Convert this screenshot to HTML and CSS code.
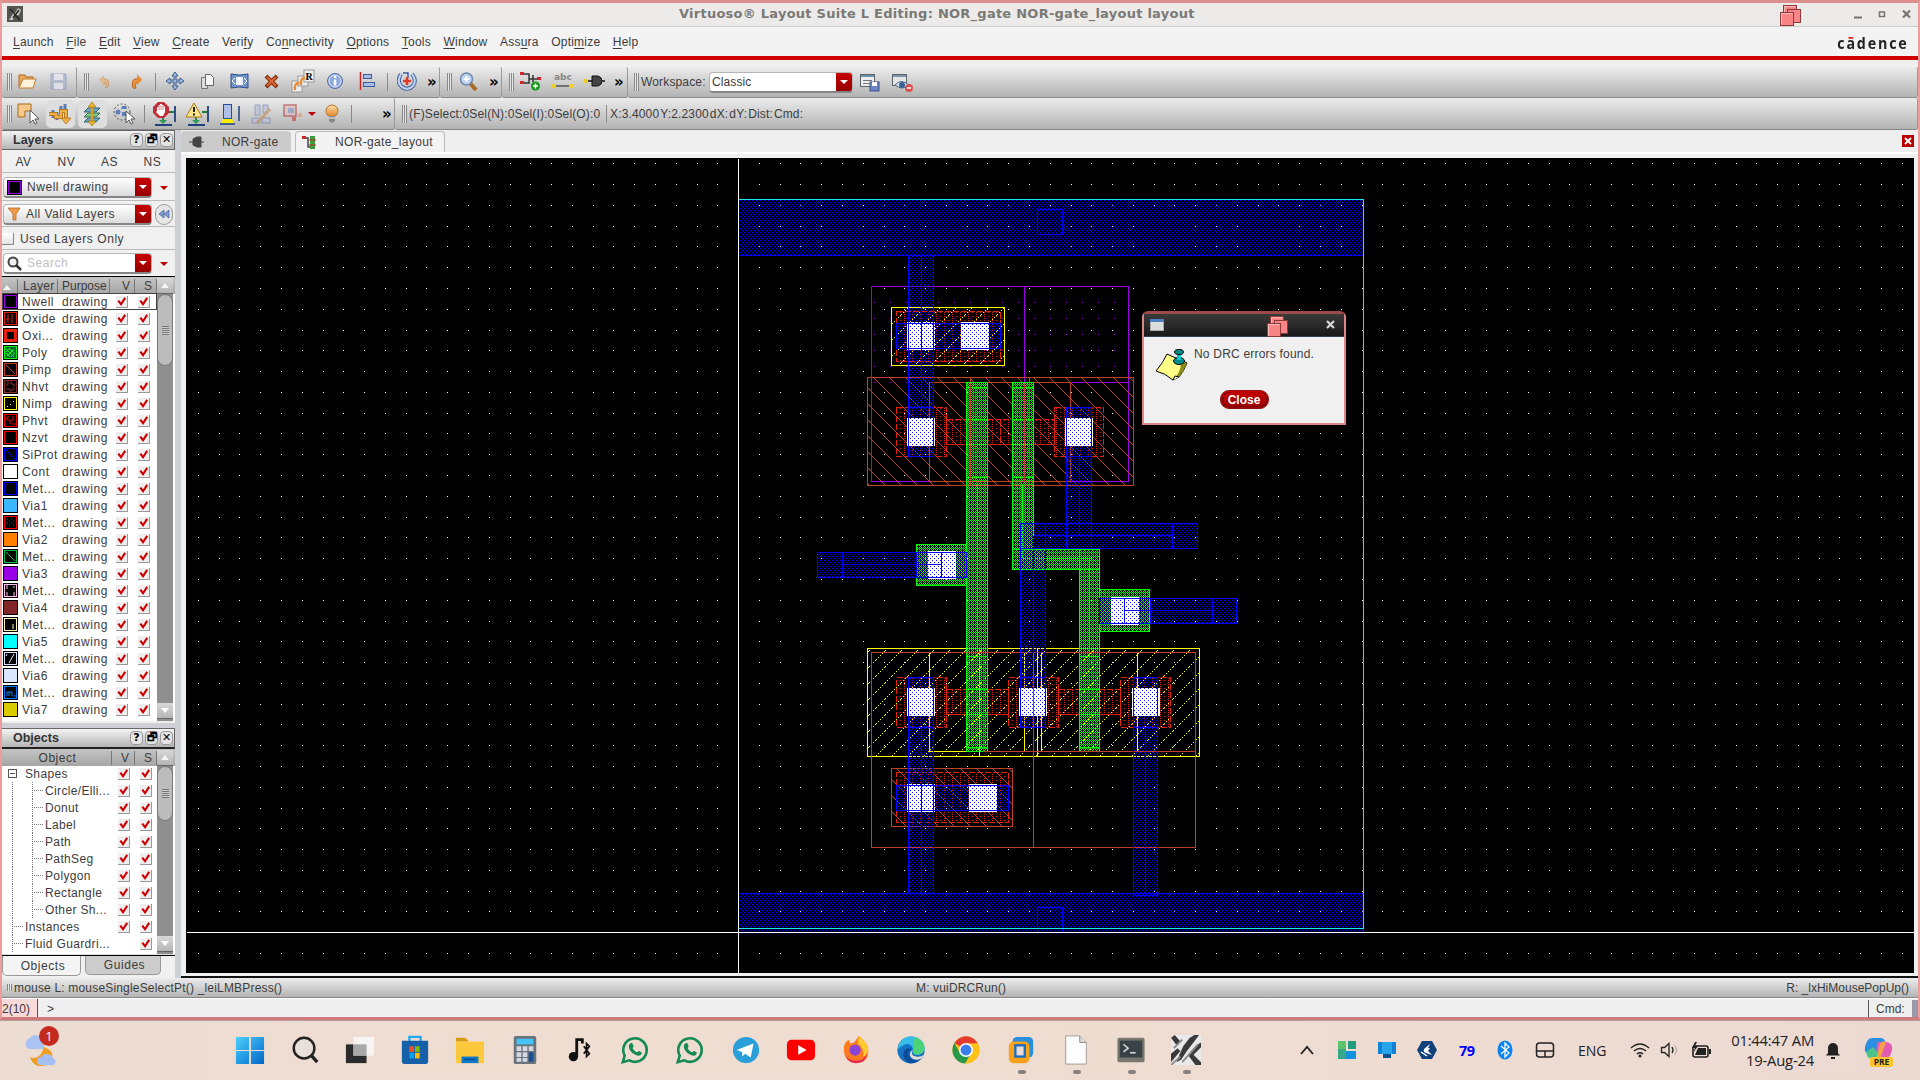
FILE: index.html
```html
<!DOCTYPE html>
<html lang="en">
<head>
<meta charset="utf-8">
<title>Virtuoso Layout Suite L Editing</title>
<link rel="stylesheet" href="styles.css">
</head>
<body>
<svg class="defs" width="0" height="0">
  <defs>
    <linearGradient id="gOrange" x1="0" y1="0" x2="0" y2="1"><stop offset="0" stop-color="#ffe0a8"/><stop offset="1" stop-color="#d98025"/></linearGradient>
    <linearGradient id="gBlue" x1="0" y1="0" x2="1" y2="1"><stop offset="0" stop-color="#4fd0ff"/><stop offset="1" stop-color="#0067c8"/></linearGradient>
    <symbol id="cascade" viewBox="0 0 21 21"><g fill="#f88686" stroke="#8d3a3a"><rect x="3.5" y=".5" width="13" height="14"/><rect x="7.500" y="4.500" width="13" height="13"/><rect x=".5" y="7.500" width="13" height="13"/></g><path d="M1.500 19.500v-11h11M4.500 7v-5.500h11" fill="none" stroke="#fcb9b9"/></symbol>
    <symbol id="whatsapp" viewBox="0 0 32 32"><path d="M3 29l2-7A12.500 12.500 0 1 1 10 27z" fill="none" stroke="#148a54" stroke-width="2.800"/><path d="M11 9c1-1 2-1 2.500.5l1 2.500c0 1-1.300 1.500-1 2.200 1 2 2.300 3.200 4.500 4.200 1 .2 1.400-1.600 2.400-1.300l2.500 1.200c1 1-.5 3.700-2.500 3.700-5 .2-11-5-11-10 0-1 .8-2.300 1.600-3z" fill="#148a54"/></symbol>
  </defs>
</svg>

<div class="win">
  <header class="titlebar">
    <svg class="app-icon" width="16" height="16"><rect width="16" height="16" fill="#55554f"/><path d="M2 14L6 8 4 5l4 2 3-5 3 2-2 5-4 1-2 4z" fill="#c8c8c4"/><path d="M3 3l10 11M6 12l6-8" stroke="#222" stroke-width="1.500"/></svg>
    <h1>Virtuoso® Layout Suite L Editing: NOR_gate NOR-gate_layout layout</h1>
    <div class="win-buttons">
      <svg class="casc" width="21" height="21"><use href="#cascade"/></svg>
      <svg width="60" height="14"><path d="M1 9.500h8" stroke="#747471" stroke-width="2"/><rect x="26.500" y="4" width="5" height="4.500" fill="none" stroke="#747471" stroke-width="1.500"/><path d="M50 2.500l7 7m0-7l-7 7" stroke="#747471" stroke-width="2.200"/></svg>
    </div>
  </header>
  <nav class="menubar">
    <span><u>L</u>aunch</span><span><u>F</u>ile</span><span><u>E</u>dit</span><span><u>V</u>iew</span><span><u>C</u>reate</span><span>Veri<u>f</u>y</span><span>Co<u>n</u>nectivity</span><span><u>O</u>ptions</span><span><u>T</u>ools</span><span><u>W</u>indow</span><span>Ass<u>u</u>ra</span><span>Opti<u>m</u>ize</span><span><u>H</u>elp</span>
    <b class="logo">c<i>ā</i>dence</b>
  </nav>

  <div class="toolrow one">
    <div class="group g1"><em class="grip"></em>
      <div class="cell w30"><svg width="20" height="18"><path d="M2 15V3h6l1 2h7v3" fill="#e9a75a" stroke="#b06a20"/><path d="M2 16L6 7h13l-3 9z" fill="#fff2dc" stroke="#c27a2c"/></svg></div>
      <div class="cell w32"><svg width="17" height="17" opacity=".75"><path d="M1 1h15v15H1z" fill="#a9b4cf" stroke="#8b98b8"/><path d="M4 1h9v6H4zM4 10h9v6H4z" fill="#e4e7ef"/></svg></div></div>
    <div class="group g2"><em class="grip"></em>
      <div class="cell w31"><svg width="14" height="18" opacity=".8"><path d="M2 7h6q4 1 2 8-1 1-3 1 3-5-1-5v2z" fill="#e5b27e" stroke="#c9915a"/><path d="M6 3L1 8l5 5z" fill="#e5b27e"/></svg></div>
      <div class="cell w31"><svg width="14" height="18"><path d="M12 7H6q-4 1-2 9 1 1 3 0-2-5 1-5z" fill="#f0923a" stroke="#bb6820"/><path d="M8 2l5 6-5 5z" fill="#e98a30"/></svg></div>
      <em class="sep"></em>
      <div class="cell w32"><svg width="20" height="20"><path d="M10 1l3 4h-2v4h4V7l4 3-4 3v-2h-4v4h2l-3 4-3-4h2v-4H5v2l-4-3 4-3v2h4V5H7z" fill="#9db6d6" stroke="#3c5f8f"/></svg></div>
      <div class="cell w32"><svg width="15" height="17"><path d="M1.500 4.500h6v11h-6z" fill="#ddd" stroke="#777"/><path d="M5.500 1.500h5l3 3v8h-8z" fill="#f4f4f4" stroke="#666"/></svg></div>
      <div class="cell w32"><svg width="19" height="16"><path d="M1 1q9 2 17 0v14q-9-2-17 0z" fill="#6f93c8" stroke="#2d4e84"/><rect x="6" y="4" width="7" height="8" fill="#eef3fb"/><path d="M9.500 4v8M5 5L2 8l3 3M14 5l3 3-3 3" stroke="#fff" fill="none"/></svg></div>
      <div class="cell w32"><svg width="15" height="15"><path d="M2 2l11 11M13 2L2 13" stroke="#7e2d10" stroke-width="4"/><path d="M3 3l9 9M12 3l-9 9" stroke="#e0672b" stroke-width="2"/></svg></div>
      <div class="cell w32"><svg width="24" height="24"><g fill="#eee" stroke="#999"><rect x="1" y="12" width="10" height="11"/><rect x="7" y="7" width="10" height="10"/><rect x="13" y="1" width="10" height="12"/></g><text x="14.500" y="11" class="rfont">R</text><path d="M4 21q-1-7 4-7M10 16q-1-7 4-7" fill="none" stroke="#e38b3b" stroke-width="2.500"/></svg></div>
      <div class="cell w32"><svg width="18" height="18"><circle cx="9" cy="9" r="7.500" fill="#8fa9dc" stroke="#5570a8"/><circle cx="9" cy="9" r="6" fill="none" stroke="#dfe8fa"/><path d="M9 4v2M9 7.500v6" stroke="#fff" stroke-width="2.500"/></svg></div>
      <div class="cell w32"><svg width="16" height="18"><path d="M1.500 0v18" stroke="#cb2222" stroke-width="1.500"/><rect x="4.500" y="2.500" width="8" height="4" fill="#a8bee6" stroke="#3b5a96"/><rect x="4.500" y="10.500" width="11" height="4" fill="#a8bee6" stroke="#3b5a96"/></svg></div>
      <em class="sep"></em>
      <div class="cell w32"><svg width="20" height="20"><path d="M4 3q-5 8 1 13 6 4 11-1 4-6-1-12" fill="none" stroke="#3c5c96" stroke-width="4"/><path d="M4 3q-5 8 1 13 6 4 11-1 4-6-1-12" fill="none" stroke="#c1d2f1" stroke-width="2.200"/><path d="M6 2h5v5" fill="none" stroke="#3c5c96" stroke-width="1.500"/><path d="M10 6v8M6 10h8" stroke="#e03c2a" stroke-width="2.500"/></svg></div>
      <b class="more">»</b></div>
    <div class="group g3"><em class="grip"></em><div class="cell w32"><svg width="19" height="19"><path d="M11 11l6 7" stroke="#a86a24" stroke-width="4"/><circle cx="7.500" cy="7" r="6" fill="#bcd3f0" stroke="#6f87a8" stroke-width="1.500"/><path d="M7.500 4v6M4.500 7h6" stroke="#fff" stroke-width="2"/></svg></div><b class="more">»</b></div>
    <div class="group g4"><em class="grip"></em>
      <div class="cell w32"><svg width="21" height="20"><path d="M3 3h6v9H3M9 8h9M13 4v7" fill="none" stroke="#333" stroke-width="1.500"/><path d="M0 1h4v3H0zM0 10h4v3H0zM17 6h4v3h-4z" fill="#d0252a"/><circle cx="15.500" cy="15" r="4.500" fill="#1a9a1a"/><path d="M15.500 12.500v5M13 15h5" stroke="#fff" stroke-width="1.500"/></svg></div>
      <div class="cell w32"><svg width="21" height="18"><text x="2" y="8" class="abc">abc</text><path d="M3 14h15" stroke="#555" stroke-width="1.500"/><path d="M0 12h4v4H0zM17 12h4v4h-4z" fill="#eecf27"/></svg></div>
      <div class="cell w32"><svg width="21" height="14"><path d="M3 7h6M17 7h4" stroke="#444" stroke-width="2"/><path d="M0 5h4v4H0z" fill="#eecf27"/><path d="M8 2h6q4 1 4 5t-4 5H8z" fill="#444" stroke="#111"/></svg></div>
      <b class="more">»</b></div>
    <div class="group g5"><em class="grip"></em><label>Workspace:</label>
      <div class="combo classic"><span>Classic</span><i class="drop"></i></div>
      <svg width="20" height="19"><rect x=".5" y="1.500" width="14" height="12" fill="#eee" stroke="#5c646e"/><path d="M1 3h13" stroke="#6c8fae" stroke-width="2"/><path d="M3 7.500h9M3 10.500h6" stroke="#777"/><rect x="10" y="9" width="9" height="9" fill="#6a84c4" stroke="#3d5188"/><path d="M12 9h5v4h-5z" fill="#fff"/></svg>
      <svg class="eye" width="21" height="19"><rect x=".5" y="1.500" width="14" height="11" fill="#e5e5e5" stroke="#5c646e"/><path d="M1 3h13" stroke="#7d96ac" stroke-width="2"/><path d="M3 12q6-7 14 0-7 6-14 0" fill="#d6e2f0" stroke="#4a6585"/><circle cx="10" cy="12" r="3" fill="#3c6397"/><circle cx="17" cy="15" r="4" fill="#d9534f"/><path d="M15 15h4" stroke="#fff" stroke-width="1.500"/></svg>
    </div>
  </div>

  <div class="toolrow two">
    <div class="group h1"><em class="grip"></em>
      <div class="cell w32"><svg width="23" height="22"><path d="M1 1h13v7H8v6H1z" fill="#f5c88c" stroke="#a86a1c"/><path d="M13 7v13l3-3 2 4 2-1-2-4h4z" fill="#fff" stroke="#555"/></svg></div>
      <div class="cell w32 on"><svg width="24" height="22"><path d="M5 7v8M9 9v8M13 3v8M17 1v9" stroke="#5b7db0" stroke-width="3" fill="none"/><path d="M1 11h7v3h5V8h5v8" fill="none" stroke="#a8690f" stroke-width="4"/><path d="M1 11h7v3h5V8h5v8" fill="none" stroke="#eeb04a" stroke-width="2.500"/><path d="M13 15h10l-5 6z" fill="#eeb04a" stroke="#a8690f" stroke-width=".7"/></svg></div>
      <div class="cell w32 on"><svg width="18" height="24"><g stroke="#356a64"><path d="M1 20l4-4h12l-4 4z" fill="#6fa0d0"/><path d="M1 15l4-4h12l-4 4z" fill="#7fca7d"/><path d="M1 10l4-4h12l-4 4z" fill="#6fa0d0"/></g><path d="M9 5v14" stroke="#dca01f" stroke-width="2.500"/><path d="M9 0l4 5H5zM9 24l4-5H5z" fill="#eab52f" stroke="#9c6b0c" stroke-width=".6"/></svg></div>
      <div class="cell w32"><svg width="22" height="22"><circle cx="9" cy="9" r="8" fill="none" stroke="#555" stroke-dasharray="2 2"/><circle cx="5" cy="9" r="2.500" fill="#5e7fb8"/><path d="M9 3h4l1 3H8zM9 9h5v4H9z" fill="#5e7fb8"/><path d="M13 8v12l3-3 2 4 2-1-2-4h4z" fill="#fff" stroke="#555"/></svg></div>
      <em class="sep"></em>
      <div class="cell w33"><svg width="25" height="24"><path d="M11 15v6M17 10h5" stroke="#1e7a40" stroke-width="1.800"/><path d="M7 18h8l-4 4z" fill="#2f9a58"/><path d="M3 23h17M23 4v16" stroke="#20407c" stroke-width="1.800"/><path d="M6 0h6l5 5v6l-5 5H6l-5-5V5z" fill="#c1303a"/><path d="M5 9V5h1.500V3H8V2h2v1h1.500v1.500H13V10l-2 4H8L4 10z" fill="#fff"/><path d="M7 3.500V8M9 3v5M11 4v4" stroke="#c1303a" stroke-width=".6"/></svg></div>
      <div class="cell w33"><svg width="25" height="24"><path d="M11 15v6M17 10h5" stroke="#1e7a40" stroke-width="1.800"/><path d="M7 18h8l-4 4z" fill="#2f9a58"/><path d="M3 23h17M23 4v16" stroke="#20407c" stroke-width="1.800"/><path d="M9 1l8 14H1z" fill="#fbe48c" stroke="#a87a17"/><path d="M9 5v5M9 11.500v2" stroke="#222" stroke-width="2"/></svg></div>
      <div class="cell w32"><svg width="22" height="23"><rect x="4.500" y="2.500" width="8" height="14" fill="#aebfea" stroke="#2d4a96"/><path d="M2 21l2-4h9l2 4z" fill="#ffee00"/><path d="M1 22h15M20 4v15" stroke="#20407c" stroke-width="1.500"/></svg></div>
      <div class="cell w32"><svg width="22" height="22" opacity=".6"><path d="M4 2h5v10H4zM12 2h5v8h-5zM1 15h8v5H1zM11 15h8v5h-8z" fill="#b5bfd9" stroke="#6b7aa5"/><path d="M6 20L19 6" stroke="#bb8854" stroke-width="3"/></svg></div>
      <div class="cell w30"><svg width="22" height="22" opacity=".6"><rect x="2" y="2" width="12" height="11" fill="#dbb" stroke="#a33" stroke-width="1.500"/><rect x="6" y="5" width="6" height="5" fill="#778dc0"/><path d="M10 14h4v4h-4z" fill="#c33"/><path d="M18 9l3 5h-6z" fill="#d79662"/></svg></div>
      <i class="tri"></i>
      <div class="cell w30 bulb"><svg width="14" height="20"><circle cx="7" cy="7" r="6" fill="url(#gOrange)" stroke="#b37028"/><path d="M4 12h6v5l-3 2-3-2z" fill="#888"/><path d="M4 14h6" stroke="#eee"/></svg></div>
      <em class="sep"></em><b class="more far">»</b></div>
    <div class="group h2"><em class="grip"></em><span class="sel">(F)Select:0Sel(N):0Sel(I):0Sel(O):0</span><em class="sep"></em><span class="xy">X:3.4000<s></s>Y:2.2300<s></s>dX:<s></s>dY:<s></s>Dist:<s></s>Cmd:</span></div>
  </div>

  <main class="main">
    <aside class="dock">
      <div class="dock-title"><b>Layers</b><i>?</i><i>🗗</i><i>✕</i></div>
      <div class="avrow"><span>AV</span><span>NV</span><span>AS</span><span>NS</span></div>
      <div class="ctl c1"><div class="combo"><em class="nwell"></em><span>Nwell drawing</span><i class="drop"></i></div><i class="tri"></i></div>
      <div class="ctl c2"><div class="combo"><svg width="14" height="14"><path d="M1 1h12L9 7v6H6V7z" fill="#ee9a4c" stroke="#b56b25" stroke-width=".8"/></svg><span>All Valid Layers</span><i class="drop"></i></div><i class="round"><svg width="12" height="10"><path d="M6 1v8L1 5zM11 1v8L6 5z" fill="#7f9bd0" stroke="#405f9c" stroke-width=".7"/></svg></i></div>
      <div class="ctl c3"><em class="box"></em><span>Used Layers Only</span></div>
      <div class="ctl c4"><div class="combo search"><svg width="15" height="15"><circle cx="6" cy="6" r="4.500" fill="#eee" stroke="#444" stroke-width="2"/><path d="M9 9l5 5" stroke="#333" stroke-width="2.500"/></svg><span>Search</span><i class="drop"></i></div><i class="tri"></i></div>
      <div class="thead layers-head"><span><i class="up"></i></span><span>Layer</span><span>Purpose</span><span>V</span><span>S</span><span></span></div>
      <div class="list"><div class="rows" id="layers"></div><div class="scroll"><i class="btn"><i class="up"></i></i><i class="thumb t1"></i><i class="btn end"><i class="down"></i></i></div></div>
      <div class="hsplit"></div>
      <div class="dock-title obj"><b>Objects</b><i>?</i><i>🗗</i><i>✕</i></div>
      <div class="thead objects-head"><span>Object</span><span>V</span><span>S</span><span></span></div>
      <div class="list objs"><div class="rows" id="objects"></div><div class="scroll"><i class="btn"><i class="up"></i></i><i class="thumb t2"></i><i class="btn end"><i class="down"></i></i></div></div>
      <div class="dock-tabs"><span class="cur">Objects</span><span>Guides</span></div>
    </aside>
    <div class="vsplit"></div>
    <section class="view">
      <div class="tabs">
        <div class="tab"><svg width="15" height="12"><path d="M0 6h4M11 6h4M4 3l4-2h4v10H8L4 9z" stroke="#444" fill="#444"/></svg><span>NOR-gate</span></div>
        <div class="tab cur"><svg width="15" height="15"><path d="M2 3h4v9h3" stroke="#444" fill="none" stroke-width="1.500"/><path d="M0 1h4v3H0z" fill="#d0252a"/><path d="M8 1h5v13H8z" fill="#3b9c3b"/><path d="M7 5h7M7 10h7" stroke="#d0252a"/></svg><span>NOR-gate_layout</span></div>
        <i class="tab-close"><svg width="12" height="12"><path d="M3 3l6 6M9 3L3 9" stroke="#fff" stroke-width="1.800"/></svg></i>
      </div>
      <div class="frame">
      <svg class="canvas" viewBox="186 158 1728 815" width="1728" height="815" shape-rendering="crispEdges">
        <defs>
          <pattern id="pM" width="4" height="4" patternUnits="userSpaceOnUse" patternTransform="translate(-.5 -.5)"><path d="M0 0h1v1H0zM2 2h1v1H2z" fill="#00f"/></pattern>
          <pattern id="pP" width="4" height="4" patternUnits="userSpaceOnUse" patternTransform="translate(-.5 -.5)"><path d="M0 0h1v1H0zM2 0h1v1H2zM1 1h1v1H1zM3 1h1v1H3zM0 2h1v1H0zM1 3h1v1H1zM3 3h1v1H3z" fill="#0f0"/></pattern>
          <pattern id="pO" width="8" height="4" patternUnits="userSpaceOnUse" patternTransform="translate(-.5 -.5)"><path d="M0 0h1v1H0zM4 0h1v1H4zM0 2h1v1H0z" fill="#e8200c"/></pattern>
          <pattern id="pPi" width="16" height="16" patternUnits="userSpaceOnUse" patternTransform="translate(-.5 -.5)"><path d="M0 0h1v1h1v1h1v1h1v1h1v1h1v1h1v1h1v1h1v1h1v1h1v1h1v1h1v1h1v1h1v1h1v1h-1v-1h-1v-1h-1v-1h-1v-1h-1v-1h-1v-1h-1v-1h-1v-1h-1v-1h-1v-1h-1v-1h-1v-1h-1v-1h-1v-1h-1v-1h-1z" fill="#bf4026"/></pattern>
          <pattern id="pN" width="16" height="16" patternUnits="userSpaceOnUse" patternTransform="translate(-.5 -.5)"><path d="M0 15h1v1H0zM2 13h1v1H2zM4 11h1v1H4zM5 10h1v1H5zM7 8h1v1H7zM9 6h1v1H9zM11 4h1v1h-1zM12 3h1v1h-1zM14 1h1v1h-1z" fill="#ff0"/></pattern>
          <pattern id="pW" width="16" height="16" patternUnits="userSpaceOnUse" patternTransform="translate(-.5 -.5)"><path d="M10 14h1v1h-1z" fill="#9a00e6"/></pattern>
        </defs>
        <rect x="186" y="158" width="1728" height="815" fill="#000"/>
        <g transform="translate(.5 .5)">
          <path id="grid" fill="#fff"/>
          <g class="well"><path d="M871 286H1128V382H871z"/><path class="o" d="M871 286H1128V481H871zM1024 286V481M1071 382H1128"/></g>
          <g class="pimp"><path d="M867 377H1133V485H867zM891 768H1012V826H891z"/><path class="o" d="M929 382H1070V481H929zM970 377V485M975 382V481M1029 377V485M1024 382V481"/></g>
          <g class="nimp"><path d="M891 307H1004V365H891zM867 648H1199V756H867z"/><path class="o" d="M929 652V751H979M979 648V756M1024 652V751M1037 648V756M1041 652V751M1137 652V751"/></g>
          <g class="oxide"><path d="M896 311H1000V361H896zM896 407H946V456H896zM946 419H1054V444H946zM1000 419V444M1054 407H1103V456H1054zM896 677H946V727H896zM946 689H1008V714H946zM1008 677H1058V727H1008zM1058 689H1120V714H1058zM1120 677H1170V727H1120zM896 772H1008V822H896z"/></g>
          <g class="poly"><path d="M966 382H987V751H966zM1012 382H1033V549H1099V751H1079V569H1012zM916 544H966V585H916zM1099 589H1149V631H1099z"/><path class="o" d="M966 387h21M1012 387h21M966 419h21M1012 419h21M966 444h21M1012 444h21M966 477h21M1012 477h21M966 656h21M1079 656h20M966 689h21M1079 689h20M966 714h21M1079 714h20M966 747h21M1079 747h20M977 483V656M1022 483V558H1091M1089 558V656M1012 549h22M1079 549v20h20"/></g>
          <path class="pimp o" d="M871 652H1195V847H871zM983 652V751H1195M1033 652V847M970 382v103M975 382v99M1024 382v99M1029 382v103"/>
          <g class="cont" transform="translate(-.5 -.5)"><path d="M907 322h28v28h-28zM961 322h28v28h-28zM907 418h28v28h-28zM1065 418h28v28h-28zM928 551h28v28h-28zM1111 597h28v28h-28zM907 688h28v28h-28zM1019 688h28v28h-28zM1132 688h28v28h-28zM907 784h28v28h-28zM969 784h28v28h-28z"/></g>
          <g class="metal"><path d="M738 199H1363V255H738zM738 893H1363V932H738zM908 255H933V407H908zM896 323H1000V348H896zM908 407H933V456H908zM1066 407H1091V456H1066zM1066 456H1091V548H1066zM817 552H966V577H817zM1020 523H1197V548H1020zM1020 548H1045V677H1020zM1099 598H1236V623H1099zM908 677H933V727H908zM1020 677H1045V727H1020zM1133 677H1157V727H1133zM908 727H933V893H908zM1133 727H1157V895H1133zM896 785H1008V810H896z"/>
          <path class="o" d="M1037 209h25v25h-25zM921 255V407M1079 456V535M842 552v25M916 552v25M941 552v25M842 564H941M1045 523v25M1172 523v25M1033 535H1172M1033 535V677M1212 598v25M1150 598v25M1124 598v25M1124 610H1212M921 727V893M1145 727V895M1037 932v-25h25v25"/></g>
          <path class="metal dense" d="M738 199H1363V255H738zM738 893H1363V932H738z"/>
          <path class="pimp o" d="M1033 652V847"/>
          <path class="bound" d="M738 199H1363V928H738"/>
          <path class="axis" d="M738 158V973M186 932H1914"/>
        </g>
      </svg>
      </div>
    </section>
  </main>

  <div class="status"><em class="grip small"></em><span class="s1">mouse L: mouseSingleSelectPt() _leiLMBPress()</span><span class="s2">M: vuiDRCRun()</span><span class="s3">R: _lxHiMousePopUp()</span></div>
  <div class="prompt"><span class="num">2(10)</span><span class="gt">&gt;</span><span class="cmd">Cmd:</span></div>
</div>

<div class="dialog">
  <div class="dlg-title">
    <svg width="14" height="12"><rect x=".5" y=".5" width="13" height="11" fill="#ddd" stroke="#aaa"/><path d="M0 1.500h14" stroke="#4f7ec2" stroke-width="3"/></svg>
    <svg class="dc" width="21" height="21"><use href="#cascade"/></svg>
    <svg class="dx" width="10" height="10"><path d="M1 1l7 7m0-7l-7 7" stroke="#d8d8d8" stroke-width="2.200"/></svg>
  </div>
  <div class="dlg-body">
    <svg width="34" height="34"><path d="M12 6l20 9q-3 8-8 14l-6 3Q10 25 1 23 8 15 12 6z" fill="#ffff8a" stroke="#000"/><path d="M32 15q-3 8-8 14l-6 3q8-8 8-17z" fill="#8c8c1c"/><path d="M18 32l2-4 4 1" fill="#fff" stroke="#000"/><ellipse cx="24" cy="13" rx="5.500" ry="3.500" fill="#008c8c" stroke="#000"/><path d="M22 5h4v7h-4z" fill="#0cc"/><ellipse cx="24" cy="4" rx="4.500" ry="2.500" fill="#008c8c" stroke="#000"/></svg>
    <p>No DRC errors found.</p>
    <button>Close</button>
  </div>
</div>

<footer class="taskbar">
  <div class="weather"><svg width="38" height="40" viewBox="0 0 38 40"><path d="M5 22a6 6 0 0 1 1-11 6 6 0 0 1 11 2 5 5 0 0 1 1 9z" fill="#a9c3f5"/><path d="M6 30q10 4 14-10 10 3 8 12-4 8-14 7-6-2-8-9z" fill="#f0a020"/><path d="M17 38a4 4 0 0 1 0-8 7 7 0 0 1 12 1 4 4 0 0 1 1 7z" fill="#a5bff3"/></svg><b>1</b></div>
  <div class="apps">
    <i><svg viewBox="0 0 32 32"><path d="M1 2h14v14H1zM17 2h14v14H17zM1 17h14v14H1zM17 17h14v14H17z" fill="url(#gBlue)"/></svg></i>
    <i><svg viewBox="0 0 32 32"><circle cx="15" cy="14" r="11" fill="#e8dfdb" stroke="#222" stroke-width="2.600"/><path d="M23 22l6 7" stroke="#222" stroke-width="3.500"/></svg></i>
    <i><svg viewBox="0 0 32 32"><path d="M1 10h22v20H1z" fill="#2b2b2b"/><path d="M9 2h22v20H9z" fill="#f7f7f7" opacity=".9"/><path d="M9 10h14v12H9z" fill="#a9a9a9"/></svg></i>
    <i><svg viewBox="0 0 32 32"><path d="M10 7V2h12v5" fill="none" stroke="#25aaf0" stroke-width="2.500"/><path d="M2 6h28v22q0 3-3 3H5q-3 0-3-3z" fill="#1560a8"/><path d="M10 12h5v6h-5z" fill="#f25022"/><path d="M16 12h5v6h-5z" fill="#7fba00"/><path d="M10 19h5v6h-5z" fill="#00a4ef"/><path d="M16 19h5v6h-5z" fill="#ffb900"/></svg></i>
    <i><svg viewBox="0 0 32 32"><path d="M1 3h10l4 4H1z" fill="#d99a10"/><path d="M1 7h30v23H1z" fill="#fdc93c"/><path d="M7 30v-7h18v7z" fill="#0f78cc"/><path d="M10 26h12" stroke="#0a4e8a" stroke-width="1.500"/></svg></i>
    <i><svg viewBox="0 0 32 32"><rect x="4" y="1" width="24" height="30" rx="2" fill="#6b747e"/><path d="M7 4h18v6H7z" fill="#42c5f5"/><path d="M7 12h5v5H7zM13.500 12h5v5h-5zM20 12h5v5h-5zM7 18.500h5v5H7zM13.500 18.500h5v5h-5zM7 24.500h5v4H7zM13.500 24.500h5v4h-5z" fill="#d6dae0"/><path d="M20 18.500h5v10h-5z" fill="#1b4f94"/></svg></i>
    <i><svg viewBox="0 0 32 32"><ellipse cx="9" cy="23" rx="5" ry="5" fill="#111"/><path d="M12.500 23V5h6v4" fill="none" stroke="#111" stroke-width="3"/><path d="M20 12l6 8-3 3V9l3 3-6 8" fill="none" stroke="#111" stroke-width="1.800"/></svg></i>
    <i><svg viewBox="0 0 32 32"><use href="#whatsapp"/></svg></i>
    <i><svg viewBox="0 0 32 32"><use href="#whatsapp"/></svg></i>
    <i><svg viewBox="0 0 32 32"><circle cx="16" cy="16" r="14" fill="#2a9fda"/><path d="M6 16l18-7-3 15-6-4-3 3v-5z" fill="#fff"/></svg></i>
    <i><svg viewBox="0 0 32 32"><rect x="1" y="5" width="30" height="22" rx="5" fill="#f00"/><path d="M13 11l9 5-9 5z" fill="#fff"/></svg></i>
    <i><svg viewBox="0 0 32 32"><path d="M3 17Q2 9 8 5l2 4q3-1 4-1l5-7q9 7 10 14 1 15-13 15Q4 29 3 17z" fill="#ff7b1e"/><path d="M5 22q6 8 18 4l5-6q-2 10-12 10-8 0-11-8z" fill="#e8245a"/><path d="M19 1q9 7 10 14-1 7-5 8 1-9-6-14z" fill="#ffcb2e"/><circle cx="15" cy="16" r="6" fill="#8b45d6"/></svg></i>
    <i><svg viewBox="0 0 32 32"><circle cx="16" cy="16" r="14.500" fill="#1673c4"/><path d="M2 15Q4 1 17 1.500 30 3 30.500 14q-1 7-9 7-5-1-3-5-2-8-9-6-5 2-7 5z" fill="#38bde8"/><path d="M20 2q10 3 10.500 12-1 7-9 7-5-1-3-5 1-3 0-6z" fill="#4bd37a"/><path d="M17 15q-7 3-1 10 5 4 11 0-5 5-12 5-9-3-7-12 3-6 9-3z" fill="#0b4f9c"/><path d="M18 16q-3 6 3 7 5 1 9-2l-3 4q-7 3-11-1-3-5 2-8z" fill="#ecdcd3"/></svg></i>
    <i><svg viewBox="0 0 32 32"><circle cx="16" cy="16" r="14.500" fill="#fbc116"/><path d="M16 16L3.500 8.600A14.500 14.500 0 0 1 28.600 8.800L16 9z" fill="#e33b2e"/><path d="M3.500 8.600A14.500 14.500 0 0 0 15 30.500L21 20 10 20z" fill="#27984a"/><circle cx="16" cy="16" r="7.500" fill="#fff"/><circle cx="16" cy="16" r="5.800" fill="#3b7ded"/></svg></i>
    <i class="run"><svg viewBox="0 0 32 32"><rect x="7" y="2" width="22" height="22" rx="5" fill="#2a8fdc"/><rect x="3" y="7" width="22" height="23" rx="5" fill="#f7a31c"/><rect x="10" y="11" width="10" height="12" fill="#ecdcd3" stroke="#1c6cc0" stroke-width="2.500"/></svg></i>
    <i class="run"><svg viewBox="0 0 32 32"><path d="M5 1h15l7 7v23H5z" fill="#fdfdfd" stroke="#8b8580" stroke-width=".8"/><path d="M20 1v7h7" fill="#ddd" stroke="#8b8580"/></svg></i>
    <i class="run"><svg viewBox="0 0 32 32"><rect x="1.500" y="3" width="29" height="26" rx="2" fill="#77776e"/><rect x="4" y="6" width="24" height="18" fill="#394347"/><path d="M8 10l5 4-5 4M15 19h6" stroke="#ddd" stroke-width="1.500" fill="none"/></svg></i>
    <i class="run"><svg viewBox="0 0 32 32"><path d="M0 0h32v32H0z" fill="#e9e9e9"/><path d="M0 3l4-3 6 7-4 4zM13 12l7-9 5-3h5L17 17l-6 9-5 3 3-8zM0 20l7-6 3 3-10 12zM18 21l9-10 5-3v5l-8 8 8 8v3h-6z" fill="#3a3a3a"/><path d="M3 14l9-9M12 29L29 10M0 32l10-9" stroke="#8a8a8a" stroke-width="2"/></svg></i>
  </div>
  <div class="tray">
    <svg width="16" height="12"><path d="M2 10l6-7 6 7" fill="none" stroke="#222" stroke-width="1.800"/></svg>
    <svg width="20" height="20"><path d="M1 1h8v8H1z" fill="#5cc46a"/><path d="M11 1h8v8h-8z" fill="#1f9d7c"/><path d="M1 9h8v10H1z" fill="#35a987"/><path d="M9 11h10v8H9z" fill="#1292e0"/></svg>
    <svg width="20" height="20"><path d="M1 2h18v12H1z" fill="#1083d6"/><path d="M5 2h10v12H5z" fill="#27a5ec"/><path d="M6 14h8v4H6z" fill="#0c4f94"/></svg>
    <svg width="20" height="20"><path d="M5 1h10l5 9-5 9H5L0 10z" fill="#12427c"/><path d="M13 4L7 9q-1 3 2 4l6 2-4-4 2-3-2 0z" fill="#fff"/><path d="M4 12l6 4" stroke="#fff" stroke-width="1.500"/></svg>
    <b>79</b>
    <svg width="16" height="20"><ellipse cx="8" cy="10" rx="7.500" ry="9.500" fill="#0a84ef"/><path d="M4 6l8 7-4 4V3l4 4-8 7" fill="none" stroke="#fff" stroke-width="1.300"/></svg>
    <svg width="20" height="18"><rect x="1.500" y="2" width="17" height="14" rx="3" fill="none" stroke="#222" stroke-width="1.500"/><path d="M2 10h16M10 10v6" stroke="#222" stroke-width="1.500"/></svg>
    <span class="lang">ENG</span>
    <svg width="20" height="16"><path d="M1 6q9-8 18 0M4 9q6-5 12 0M7 12q3-2.500 6 0" fill="none" stroke="#222" stroke-width="1.600"/><circle cx="10" cy="14" r="1.500" fill="#222"/></svg>
    <svg width="20" height="16"><path d="M1.500 5.500h3L9 1.500v13l-4.500-4h-3z" fill="none" stroke="#222" stroke-width="1.300"/><path d="M12 5q2 3 0 6" fill="none" stroke="#222" stroke-width="1.300"/><path d="M14.500 3q4 5 0 10" fill="none" stroke="#aaa"/></svg>
    <svg width="22" height="18"><rect x="3" y="5" width="15" height="11" rx="2" fill="none" stroke="#222" stroke-width="1.600"/><path d="M8 7h8v7H5z" fill="#222"/><path d="M19 8v5h2V8zM5 1L2 7h3l-2 5 5-7H5l2-4z" fill="#222"/></svg>
    <div class="clock"><span>01:44:47 AM</span><span>19-Aug-24</span></div>
    <svg width="16" height="20"><path d="M3 8a5 5 0 0 1 10 0v5l2 2.500H1L3 13z" fill="#222"/><path d="M6 17h4v2H6z" fill="#222"/></svg>
    <div class="copilot"><svg width="30" height="26"><path d="M8 1h9q4 0 5 6l2 9H4Q0 16 1 10 3 1 8 1z" fill="#2b8ee0"/><path d="M13 5h10q6 1 5 8-2 9-7 9h-9z" fill="#e25bb4"/><path d="M8 22q-5 0-6-7l7-5 5 6-2 6z" fill="#4cc38a"/><path d="M12 22l4-15q2-4 6-2l-4 12q-2 6-6 5z" fill="#f6a04a"/></svg><b>PRE</b></div>
  </div>
</footer>
<script src="app.js"></script>
</body>
</html>
```

FILE: styles.css
```css
* { box-sizing: border-box; }
body { margin: 0; width: 1920px; height: 1080px; overflow: hidden; background: #ecdcd3; font: 12px "Liberation Sans", Arial, sans-serif; color: #3c3c3c; }
i, em { font-style: normal; }
svg { display: block; flex: none; }
.defs { position: absolute; }

.win { width: 1920px; height: 1020px; border: 2px solid #ee9c9c; border-top: 3px solid #dd8f8f; border-bottom: 3px solid #cf7b7d; display: flex; flex-direction: column; background: #efefef; }
.titlebar { height: 24px; flex: none; background: #edebe9; border-bottom: 1px solid #cfcdcb; display: flex; align-items: center; padding: 0 5px; }
.app-icon { margin-top: -2px; }
.titlebar h1 { margin: -3px 0 0 656px; font: bold 13px "DejaVu Sans", sans-serif; letter-spacing: .25px; color: #797976; white-space: nowrap; }
.win-buttons { display: flex; align-items: center; gap: 52px; width: 133px; margin-left: auto; }
.casc { margin-top: 2px; }
.menubar { height: 29px; flex: none; display: flex; align-items: center; gap: 12.500px; padding: 0 9px 0 11px; background: #f3f3f3; letter-spacing: .22px; }
.menubar span { white-space: nowrap; margin-top: 1px; }
.menubar u { text-underline-offset: 2px; }
.logo { margin-left: auto; font: bold 15.500px "Open Sans", sans-serif; letter-spacing: 2px; color: #222; transform: scaleX(.92); transform-origin: right; padding-top: 3px; }
.logo i { background: linear-gradient(#d22 36%, #222 36%); background-clip: text; color: transparent; }

.toolrow { display: flex; flex: none; }
.one { height: 42px; border-top: 4px solid #ce0000; padding-top: 7px; }
.two { height: 32px; }
.group { height: 100%; flex: none; display: flex; align-items: center; padding-left: 5px; background: linear-gradient(#ececec, #b3b3b3); border-bottom: 1px solid #888; border-right: 1px solid #999; border-radius: 2px; white-space: nowrap; }
.one .cell svg { margin-top: -2px; }
.g1 { width: 75px; } .g2 { width: 363px; padding-left: 7px; } .g3 { width: 62px; padding-left: 7px; } .g4 { width: 126px; padding-left: 7px; } .g5 { flex: 1; padding-left: 6px; }
.h1 { width: 393px; } .h2 { flex: 1; padding-left: 7px; }
.grip { width: 5px; height: 18px; flex: none; background: repeating-linear-gradient(90deg, #888 0 1px, #e8e8e8 1px 2px); }
.sep { width: 8px; height: 18px; flex: none; background: linear-gradient(#888, #888) 4px 0 / 1px 100% no-repeat; }
.cell { flex: none; display: flex; justify-content: center; align-items: center; }
.w30 { width: 30px; } .w31 { width: 31px; } .w32 { width: 32px; } .w33 { width: 33px; }
.cell.on { height: 28px; width: 29px; margin: 0 1.500px; background: #dedede; border-radius: 5px; }
.more { font: bold 15px "DejaVu Sans", sans-serif; color: #000; margin-left: 4px; }
.g3 .more { margin-left: 5px; }
.more.far { margin-left: 27px; }
.bulb { margin-left: 1px; }
.rfont { font: bold 10px "Liberation Serif", serif; }
.abc { font: bold 9px "DejaVu Sans", sans-serif; fill: #888; }
.g5 label { margin: 0 4px 0 2px; width: 64px; letter-spacing: .15px; }
.combo { display: flex; align-items: center; height: 21px; border: 1px solid #b5b5b5; border-bottom: 2px solid #858585; border-radius: 4px; overflow: hidden; background: linear-gradient(#fff, #dcdcdc); }
.classic { width: 144px; background: #fff; margin-right: 7px; padding-left: 2px; letter-spacing: .1px; }
.drop { margin-left: auto; width: 16px; height: 100%; flex: none; background: linear-gradient(#c80000, #950000); display: flex; align-items: center; justify-content: center; }
.drop::after { content: ""; border: 4px solid transparent; border-top: 4px solid #fff; border-bottom: 0; }
.eye { margin-left: 12px; }
.tri { border: 4px solid transparent; border-top: 4px solid #b80000; border-bottom: 0; flex: none; }
.h2 .sel { width: 193px; margin-left: 2px; }
.h2 .xy { margin-left: 0; }
.h2 s { display: inline-block; width: 1px; }
.h2 span { letter-spacing: .15px; }

.main { display: flex; height: 848px; flex: none; }
.dock { width: 173px; display: flex; flex-direction: column; letter-spacing: .55px; background: #f0f0f0; }
.dock-title { height: 20px; flex: none; display: flex; align-items: center; gap: 2px; padding: 0 1px 0 11px; border: 1px solid #666; border-left: 0; background: linear-gradient(#f4f4f4, #b5b5b5); letter-spacing: 0; }
.dock-title.obj { height: 21px; border-bottom: 2px solid #222; }
.dock-title b { margin-right: auto; color: #333; font-size: 12.500px; }
.dock-title i { width: 13px; height: 14px; border: 1px solid #999; border-radius: 4px; background: #e4e4e4; font: bold 11px/12px "DejaVu Sans", sans-serif; color: #000; text-align: center; }
.avrow { height: 23px; display: flex; flex: none; border-bottom: 1px solid #bbb; align-items: center; padding-top: 2px; }
.avrow span { width: 43px; text-align: center; }
.ctl { display: flex; align-items: center; flex: none; border-bottom: 1px solid #bbb; padding: 1px 0 0 1px; }
.ctl .combo { width: 149px; padding-left: 3px; gap: 5px; }
.ctl .tri { margin-left: 8px; }
.c1 { height: 28px; padding-top: 2px; } .c2 { height: 26px; letter-spacing: .45px; } .c3 { height: 23px; gap: 6px; padding-top: 2px; } .c4 { height: 27px; border-bottom: 1px solid #000; }
.nwell { width: 15px; height: 15px; background: #000; border: 1px solid #000; outline: 1px solid #9a00e6; outline-offset: -2px; }
.round { width: 18px; height: 21px; margin-left: 3px; border: 1px solid #999; border-radius: 10px; background: #e6e6e6; display: flex; align-items: center; justify-content: center; }
.box { width: 12px; height: 12px; margin-left: -1px; background: linear-gradient(#fff, #e4e4e4); border: solid #888; border-width: 0 1px 1px 0; }
.search.combo { background: #fff; }
.search span { color: #c0c0c0; }
.thead { display: grid; height: 17px; flex: none; background: linear-gradient(#c4c4c4, #a5a5a5); align-items: center; }
.thead span { height: 14px; line-height: 14px; border-right: 1px solid #777; padding-left: 5px; white-space: nowrap; }
.thead span:last-child { border: 0; }
.layers-head { grid-template-columns: 16px 40px 52px 25px 22px 1fr; letter-spacing: .3px; }
.layers-head span:nth-child(3) { padding-left: 4px; letter-spacing: 0; }
.layers-head span:nth-child(5) { padding-left: 9px; }
.layers-head span:nth-child(4) { padding-left: 12px; }
.objects-head { grid-template-columns: 110px 23px 22px 1fr; }
.objects-head span:first-child { text-align: center; padding-left: 2px; }
.objects-head span { padding-left: 9px; }
.up { display: inline-block; border: 4px solid transparent; border-bottom: 5px solid #f4f4f4; border-top: 0; }
.down { display: inline-block; border: 4px solid transparent; border-top: 5px solid #fff; border-bottom: 0; }
.layers-head .up { margin-left: -4px; }
.list { display: flex; height: 427px; flex: none; background: #fff; }
.objs { height: 189px; border-bottom: 1px solid #ddd; }
.rows { width: 155px; flex: none; margin-top: -1px; }
.row { height: 17px; display: flex; align-items: center; white-space: nowrap; }
.row .sw { margin-left: 1px; width: 15px; }
.row .nm { width: 44px; padding-left: 4px; }
.row .pu { width: 54px; }
.row.first { outline: 1.500px solid #444; outline-offset: -1px; }
.ck { width: 12px; height: 12px; margin-right: 10px; background: #eee; border: solid #999; border-width: 0 1px 1px 0; flex: none; }
.rows .ck:last-child { margin-right: 5px; }
.scroll { width: 16px; margin: -16px 0 0 0; background: #8f8f8f; display: flex; flex-direction: column; }
.btn { height: 16px; flex: none; background: linear-gradient(#d8d8d8, #b5b5b5); border-bottom: 1px solid #666; display: flex; align-items: center; justify-content: center; }
.btn.end { margin-top: auto; margin-bottom: 2px; }
.thumb { width: 16px; border-radius: 8px; background: repeating-linear-gradient(#777 0 1px, #ccc 1px 2px) center / 7px 9px no-repeat, #bcbcbc; border: 1px solid #777; }
.t1 { height: 72px; } .t2 { height: 55px; }
.hsplit { height: 7px; flex: none; background: #cfd0d6; border-top: 2px solid #eee; }
.orow { height: 17px; display: flex; align-items: center; white-space: nowrap; padding-left: 12px; }
.orow .tree { width: 11px; height: 17px; flex: none; background: linear-gradient(90deg, #777 50%, transparent 50%) 0 8px / 2px 1px repeat-x, linear-gradient(#777 50%, transparent 50%) 0 0 / 1px 2px repeat-y; }
.orow.kid { background: linear-gradient(#777 50%, transparent 50%) 10px 0 / 1px 2px repeat-y; }
.orow .tree { margin-left: -2px; }
.orow.kid .tree { margin-left: 18px; width: 12px; }
.orow .nm { flex: 1; padding-left: 2px; letter-spacing: .35px; }
.orow.kid .nm { padding-left: 1px; }
.orow.root .tree { background: none; }
.plus { display: block; margin-left: -4px; width: 9px; height: 9px; margin-top: 4px; border: 1px solid #555; background: linear-gradient(#555, #555) 1px 3px / 5px 1px no-repeat #fff; }
.none { visibility: hidden; }
.dock-tabs { display: flex; gap: 4px; flex: 1; border-top: 1px solid #000; }
.dock-tabs span { width: 76px; height: 19px; line-height: 19px; text-align: center; background: #ccc; border: 1px solid #999; border-top: 0; border-radius: 0 0 5px 5px; padding-left: 3px; }
.dock-tabs .cur { width: 79px; height: 20px; line-height: 20px; background: #f4f4f4; }
.vsplit { width: 6px; background: #cfd0d6; }
.view { flex: 1; display: flex; flex-direction: column; }
.tabs { height: 22px; display: flex; gap: 4px; padding-top: 1px; letter-spacing: .3px; }
.tab { width: 110px; display: flex; align-items: center; padding-left: 8px; background: #cbcbcb; border-radius: 4px 4px 0 0; }
.tab span { margin-left: 18px; padding-top: 1px; }
.tab.cur { width: 150px; background: #f3f3f3; border: 1px solid #bbb; border-bottom: 0; padding-left: 6px; }
.tab.cur span { letter-spacing: .35px; padding-top: 0; }
.tab-close { margin: 4px 4px 0 auto; width: 12px; height: 12px; background: #b80000; }
.frame { height: 826px; padding: 4px 4px 0 5px; border-top: 2px solid #fff; border-bottom: 2px solid #111; background: #f0f0f2; }

.status { height: 20px; flex: none; display: grid; grid-template-columns: 12px 902px 1fr auto; align-items: center; background: linear-gradient(#ececec, #b5b5b5); border-bottom: 1px solid #888; padding-right: 9px; white-space: nowrap; }
.small { height: 7px; margin-left: 5px; }
.s1 { letter-spacing: .18px; } .s2 { letter-spacing: .15px; }
.prompt { height: 19px; flex: none; display: flex; align-items: center; border-top: 1px solid #fff; }
.num { width: 36px; height: 18px; line-height: 20px; background: #f8d9d9; border-right: 1px solid #555; }
.gt { margin: 2px 0 0 9px; }
.cmd { margin-left: auto; width: 50px; height: 17px; line-height: 19px; border-left: 1px solid #555; border-right: 6px solid #99a; padding-left: 7px; }

.canvas .well { fill: url(#pW); stroke: none; }
.canvas .o { fill: none; }
.canvas .well .o { stroke: #9a00e6; }
.canvas .pimp { fill: url(#pPi); stroke: #bf4026; }
.canvas .nimp { fill: url(#pN); stroke: #ff0; }
.canvas .oxide { fill: url(#pO); stroke: #e8200c; stroke-dasharray: 6 2; }
.canvas .poly { fill: url(#pP); stroke: #0f0; }
.canvas .cont { fill: #fff; }
.canvas .metal { fill: url(#pM); stroke: #00f; }
.canvas .dense { stroke: none; transform: translate(0, 1px); opacity: .35; }
.canvas .pimp.o, .canvas .pimp .o, .canvas .nimp .o, .canvas .poly .o, .canvas .metal .o { fill: none; }
.canvas .bound { fill: none; stroke: #18e6f0; }
.canvas .axis { fill: none; stroke: #fff; }

.dialog { position: absolute; left: 1142px; top: 311px; width: 204px; height: 114px; border: 2px solid #dc8686; border-top: 3px solid #9e4a4a; border-radius: 6px 6px 0 0; background: #f0f0f0; }
.dlg-title { height: 23px; display: flex; align-items: center; padding: 0 8px 0 6px; background: linear-gradient(#3a3a3a, #191919); border-bottom: 1px solid #34404e; }
.dc { margin: 3px 42px 0 auto; }
.dx { margin-left: -4px; }
.dlg-body { display: grid; grid-template-columns: 39px 1fr; padding: 11px 0 0 11px; }
.dlg-body p { margin: 0; letter-spacing: .2px; line-height: 12px; }
.dlg-body button { grid-column: 1 / 3; width: 49px; height: 19px; margin: 8px 0 0 64.500px; padding: 0; border: 1px solid #8e1010; border-radius: 9px; background: linear-gradient(#cc0000, #980000); color: #fff; font: bold 12px "Liberation Sans", sans-serif; outline: 1px dotted #300; outline-offset: -3px; }

.taskbar { height: 59px; display: flex; align-items: center; background: linear-gradient(90deg, #eddcd2, #f0ddd1 45%, #ecd9d2); border-top: 1px solid #b59c98; color: #222; }
.weather { position: relative; width: 222px; padding-left: 24px; }
.weather svg { margin-top: -6px; }
.weather b { position: absolute; left: 39px; top: -7px; width: 20px; height: 20px; border-radius: 50%; background: #c42b1c; color: #fff; text-align: center; font: 13px/20px "Open Sans", sans-serif; }
.apps { display: flex; width: 992px; }
.apps i { width: 55.110px; height: 58px; display: flex; align-items: center; justify-content: center; position: relative; }
.apps svg { width: 30px; height: 30px; }
.run::after { content: ""; position: absolute; bottom: 5px; left: 24px; width: 8px; height: 4px; border-radius: 2px; background: #8a817d; }
.tray { display: flex; align-items: center; margin-left: 85px; font: 14px "Open Sans", sans-serif; width: 600px; }
.tray > svg { margin-right: 20px; }
.tray > svg:nth-of-type(1) { margin-right: 22px; }
.tray b { color: #00f; font-weight: 700; font-size: 14.500px; width: 17px; margin: 0 21px 0 2px; letter-spacing: -.5px; }
.tray > svg:nth-of-type(5) { margin-right: 22px; }
.lang { width: 30px; margin: 0 22px 0 3px; }
.tray > svg:nth-of-type(7), .tray > svg:nth-of-type(8) { margin-right: 10px; }
.tray > svg:nth-of-type(9) { margin-right: 8px; }
.clock { display: flex; flex-direction: column; width: 94px; font-size: 14.800px; line-height: 20.500px; white-space: nowrap; letter-spacing: -.2px; align-items: flex-end; margin-right: 11px; }
.tray > svg:nth-of-type(10) { margin-right: 23px; }
.copilot { position: relative; }
.copilot b { position: absolute; left: 6px; bottom: -4px; margin: 0; width: 23px; height: 10px; line-height: 10px; background: #ffc62b; color: #222; font-size: 8.500px; text-align: center; border-radius: 2px; letter-spacing: 0; }
```

FILE: app.js
```js
// Layer palette: name, frame colour, fill colour, stipple mark
const layers = [
  ["Nwell", "#9a00e6", "#000", ""],
  ["Oxide", "#e8200c", "#000", "M5 3v9M9 3v9M3 8h3"],
  ["Oxi...", "#e8200c", "#e8200c", "core"],
  ["Poly", "#0f0", "#063", "M3 4l8 8M6 3l6 6M3 8l4 4M4 11l7-7M3 7l4-4M8 12l4-4"],
  ["Pimp", "#bf4026", "#000", "M3 3l9 9"],
  ["Nhvt", "#8b2a2a", "#000", "M5 2v4H3M8 2v3h3v3M3 10h4v3M9 12v-2h3"],
  ["Nimp", "#ff0", "#000", "M4 11l1-1M7 9l1-1M10 6l1-1"],
  ["Phvt", "#f00", "#000", "M6 4H4v3h3v4M10 3v4H8M9 11h3"],
  ["Nzvt", "#f00", "#000", ""],
  ["SiProt", "#00f", "#000", "M3 3l9 9"],
  ["Cont", "#fff", "#fff", ""],
  ["Met...", "#00f", "#000", "M4 4h1M8 4h1M6 6h1M10 6h1M4 8h1M8 8h1M6 10h1M10 10h1"],
  ["Via1", "#3cb8ff", "#3cb8ff", ""],
  ["Met...", "#f00", "#000", "M4 4h1M8 4h1M6 6h1M10 6h1M4 8h1M8 8h1M6 10h1M10 10h1"],
  ["Via2", "#ff8000", "#ff8000", ""],
  ["Met...", "#00c050", "#000", "M3 3l9 9"],
  ["Via3", "#9a00e6", "#9a00e6", ""],
  ["Met...", "#ffbfea", "#000", "M4 2v4M4 9v4M11 3v2M11 9v4"],
  ["Via4", "#802626", "#802626", ""],
  ["Met...", "#fff4b0", "#000", "M10 7v5"],
  ["Via5", "#0ff", "#0ff", ""],
  ["Met...", "#d9e6ff", "#000", "M6 12l5-9M3 5l1-2"],
  ["Via6", "#d9e6ff", "#d9e6ff", ""],
  ["Met...", "#0080ff", "#000", "M4 11V7h5v4M6 7v4M11 12l1-2"],
  ["Via7", "#d9cc00", "#d9cc00", ""]
];
const check = '<svg class="ck" viewBox="0 0 12 12"><path d="M2.500 5l3 4 4.500-7" fill="none" stroke="#cc0000" stroke-width="2.300"/></svg>';
const stipple = (mark, edge) => mark === "core"
  ? '<rect x="4" y="4" width="7" height="7" fill="#000"/>'
  : `<path d="${mark}" stroke="${edge}" fill="none"/>`;

document.getElementById("layers").innerHTML = layers.map(([name, edge, fill, mark], i) =>
  `<div class="row${i ? "" : " first"}"><svg class="sw" width="15" height="15"><rect width="15" height="15" fill="#000"/><rect x="1.500" y="1.500" width="12" height="12" fill="${fill}" stroke="${edge}"/>${stipple(mark, edge)}</svg><span class="nm">${name}</span><span class="pu">drawing</span>${check}${check}</div>`).join("");

const objects = ["Shapes", "Circle/Elli...", "Donut", "Label", "Path", "PathSeg", "Polygon", "Rectangle", "Other Sh...", "Instances", "Fluid Guardri..."];
document.getElementById("objects").innerHTML = objects.map((name, i) => {
  const kind = i === 0 ? "root" : i < 9 ? "kid" : "";
  const visible = i === 10 ? check.replace('"ck"', '"ck none"') : check;
  return `<div class="orow ${kind}"><span class="tree">${i ? "" : '<i class="plus"></i>'}</span><span class="nm">${name}</span>${visible}${check}</div>`;
}).join("");

// Grid dots, counted outward from the drawing origin
const pitch = 20.78;
let dots = "";
for (let r = -37; r <= 1; r++)
  for (let c = -26; c <= 56; c++)
    dots += `M${Math.round(738.1 + c * pitch) - 0.5} ${Math.round(932.2 + r * pitch) - 0.5}h1v1h-1z`;
document.getElementById("grid").setAttribute("d", dots);
```
